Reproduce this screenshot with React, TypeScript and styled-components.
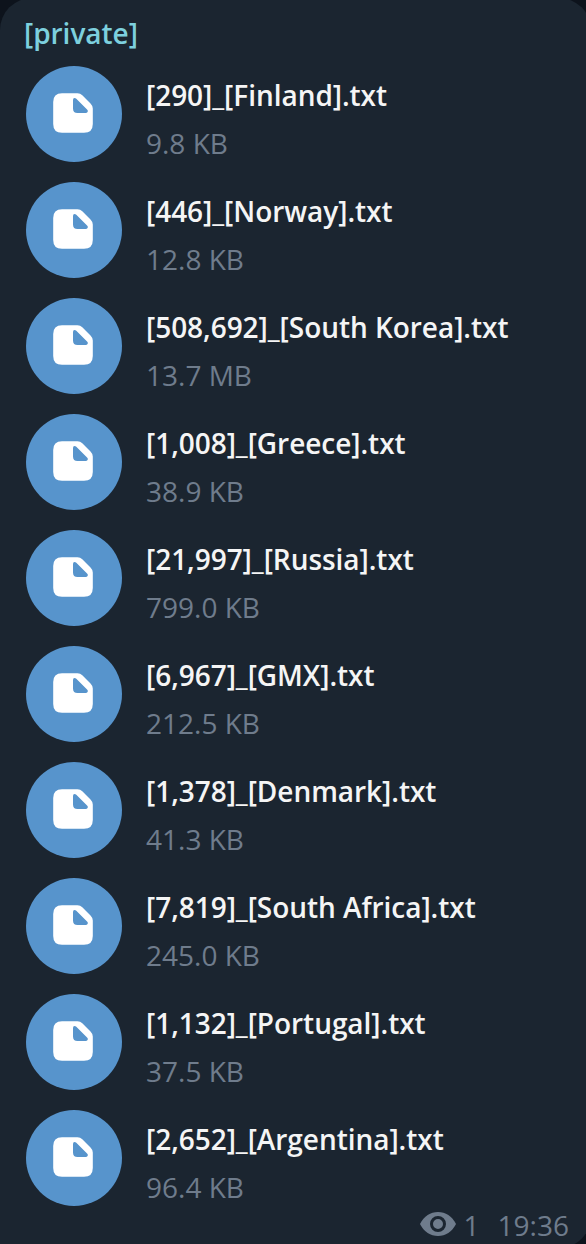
import React from "react";
import styled, { createGlobalStyle } from "styled-components";

const GlobalStyle = createGlobalStyle`
  html, body { margin: 0; padding: 0; background: #0d131c; overflow: hidden; }
  * { box-sizing: border-box; }
`;

const Viewport = styled.main`
  width: 586px;
  height: 1244px;
  overflow: hidden;
  background: #0d131c;
  font-family: "Open Sans", "Noto Sans", sans-serif;
  font-size: 28px;
`;

const Bubble = styled.article`
  display: flex;
  flex-direction: column;
  width: 591px;
  height: 1250px;
  margin-top: -2px;
  padding: 15px 22px 0 24px;
  background: #1b2530;
  border-radius: 32px 32px 32px 0;
`;

const Sender = styled.header`
  height: 53px;
  line-height: 40px;
  font-weight: 600;
  letter-spacing: -0.04px;
  color: #7dd0de;
  white-space: nowrap;
`;

const FileList = styled.ul`
  display: flex;
  flex-direction: column;
  gap: 20px;
  margin: 0;
  padding: 0 0 0 2px;
  list-style: none;
`;

const FileRow = styled.li`
  display: flex;
  gap: 24px;
  height: 96px;
`;

const FileBadge = styled.span`
  display: flex;
  flex: none;
  width: 96px;
  height: 96px;
  padding: 27px;
  border-radius: 50%;
  background: #5794cc;
`;

const FileInfo = styled.div`
  display: flex;
  flex-direction: column;
  padding-top: 5px;
  white-space: nowrap;
`;

const FileName = styled.span`
  height: 48px;
  line-height: 48px;
  font-weight: 600;
  letter-spacing: -0.04px;
  color: #f5f5f5;
`;

const FileSize = styled.span`
  height: 48px;
  line-height: 48px;
  color: #6f7c8c;
`;

const Footer = styled.footer`
  display: flex;
  justify-content: flex-end;
  align-items: center;
  height: 38px;
  color: #6f7c8c;
  white-space: nowrap;
`;

const Eye = styled.svg`
  flex: none;
  margin-bottom: 2px;
`;

const Views = styled.span`
  margin: 0 18px 0 8px;
`;

const files = [
  ["[290]_[Finland].txt", "9.8 KB"],
  ["[446]_[Norway].txt", "12.8 KB"],
  ["[508,692]_[South Korea].txt", "13.7 MB"],
  ["[1,008]_[Greece].txt", "38.9 KB"],
  ["[21,997]_[Russia].txt", "799.0 KB"],
  ["[6,967]_[GMX].txt", "212.5 KB"],
  ["[1,378]_[Denmark].txt", "41.3 KB"],
  ["[7,819]_[South Africa].txt", "245.0 KB"],
  ["[1,132]_[Portugal].txt", "37.5 KB"],
  ["[2,652]_[Argentina].txt", "96.4 KB"],
];

const DocumentIcon = () => (
  <svg width="40" height="40" viewBox="0 0 40 40" aria-hidden="true">
    <path
      fill="#fff"
      d="M9 0.200H24.500Q27.300 0.200 29.300 2.200L37.500 10.400Q39.800 12.700 39.800 15.500V31Q39.800 39.800 31 39.800H9Q0.200 39.800 0.200 31V9Q0.200 0.200 9 0.200Z"
    />
    <path
      fill="#5794cc"
      d="M20 7Q20 5 21.500 5Q22.500 5 23.300 5.800L34.300 16.800Q35 17.500 34.800 18.500Q34.400 19.900 33 19.900H24.500Q20 19.900 20 15.400Z"
    />
  </svg>
);

const EyeIcon = () => (
  <Eye width="36" height="24" viewBox="0 0 36 24" aria-hidden="true">
    <path fill="#6f7c8c" d="M0 12C4 4 10.500 0 18 0S32 4 36 12C32 20 25.500 24 18 24S4 20 0 12Z" />
    <circle cx="18" cy="12" r="6.500" fill="#6f7c8c" stroke="#1b2530" strokeWidth="3" />
  </Eye>
);

export default function App() {
  return (
    <Viewport>
      <GlobalStyle />
      <Bubble>
        <Sender>[private]</Sender>
        <FileList>
          {files.map(([name, size]) => (
            <FileRow key={name}>
              <FileBadge>
                <DocumentIcon />
              </FileBadge>
              <FileInfo>
                <FileName>{name}</FileName>
                <FileSize>{size}</FileSize>
              </FileInfo>
            </FileRow>
          ))}
        </FileList>
        <Footer>
          <EyeIcon />
          <Views>1</Views>
          <time>19:36</time>
        </Footer>
      </Bubble>
    </Viewport>
  );
}
